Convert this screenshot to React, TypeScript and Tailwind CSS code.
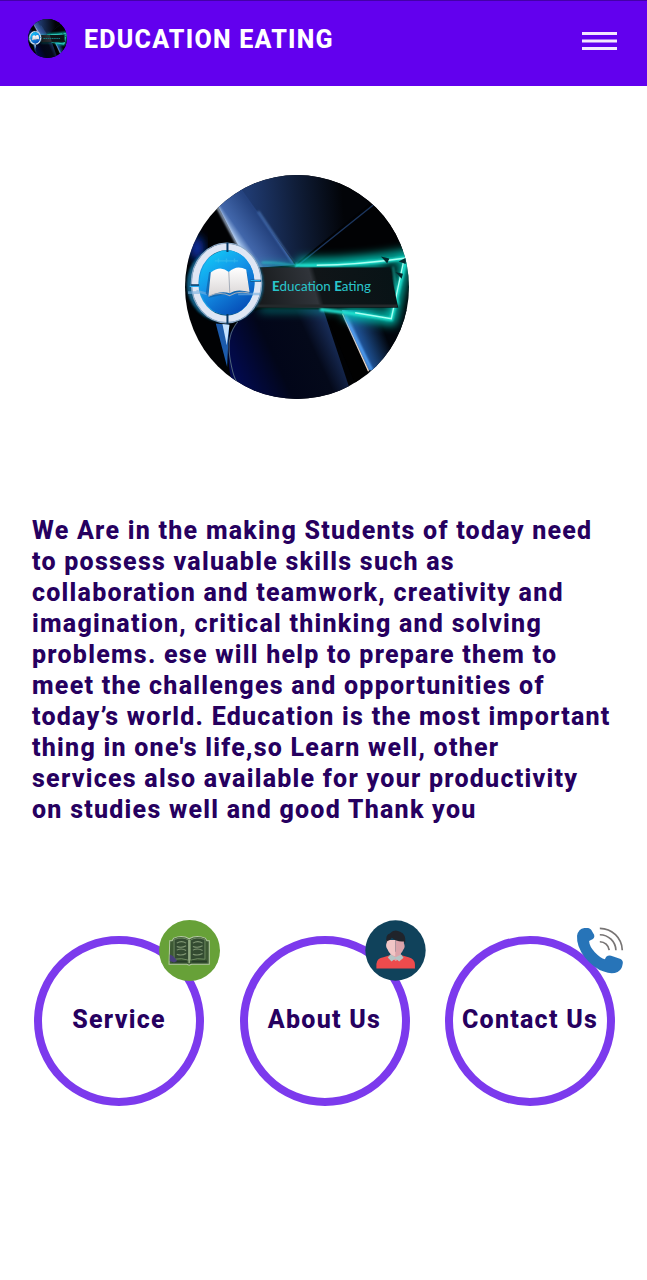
import type { ReactNode } from 'react';

function BrandArt({ id, className, withName = false }: { id: string; className: string; withName?: boolean }) {
  const ref = (name: string) => `url(#${id}-${name})`;
  return (
    <svg viewBox="26 26 670 670" className={className} role="img" aria-label="Education Eating logo">
      <defs>
        <clipPath id={`${id}-clip`}><circle cx="361" cy="361" r="335" /></clipPath>
        <linearGradient id={`${id}-beam`} x1="170" y1="210" x2="300" y2="120" gradientUnits="userSpaceOnUse">
          <stop offset="0" stopColor="#a9c8f0" /><stop offset="0.15" stopColor="#4267ab" /><stop offset="0.6" stopColor="#25437f" /><stop offset="1" stopColor="#1c3a78" />
        </linearGradient>
        <linearGradient id={`${id}-top`} x1="220" y1="150" x2="500" y2="130" gradientUnits="userSpaceOnUse">
          <stop offset="0" stopColor="#1f3a70" /><stop offset="0.5" stopColor="#101e3a" /><stop offset="1" stopColor="#020408" />
        </linearGradient>
        <linearGradient id={`${id}-low`} x1="170" y1="620" x2="470" y2="480" gradientUnits="userSpaceOnUse">
          <stop offset="0" stopColor="#020a50" /><stop offset="0.4" stopColor="#020619" /><stop offset="0.75" stopColor="#04091a" /><stop offset="1" stopColor="#1b3262" />
        </linearGradient>
        <linearGradient id={`${id}-right`} x1="520" y1="530" x2="620" y2="490" gradientUnits="userSpaceOnUse">
          <stop offset="0" stopColor="#8fc4ff" /><stop offset="0.3" stopColor="#1e5296" /><stop offset="1" stopColor="#01050c" />
        </linearGradient>
        <linearGradient id={`${id}-bar`} x1="250" y1="420" x2="640" y2="310" gradientUnits="userSpaceOnUse">
          <stop offset="0" stopColor="#171a1c" /><stop offset="0.42" stopColor="#30343a" /><stop offset="0.46" stopColor="#101518" /><stop offset="1" stopColor="#081316" />
        </linearGradient>
        <linearGradient id={`${id}-badge`} x1="0" y1="0" x2="0.6" y2="1">
          <stop offset="0" stopColor="#10d5fa" /><stop offset="0.5" stopColor="#1494e8" /><stop offset="1" stopColor="#0752ba" />
        </linearGradient>
        <linearGradient id={`${id}-page`} x1="0" y1="0" x2="0" y2="1">
          <stop offset="0" stopColor="#ffffff" /><stop offset="1" stopColor="#d9d5d5" />
        </linearGradient>
        <filter id={`${id}-glow`} x="-30%" y="-60%" width="160%" height="220%"><feGaussianBlur stdDeviation="14" /></filter>
        <filter id={`${id}-soft`} x="-20%" y="-20%" width="140%" height="140%"><feGaussianBlur stdDeviation="3" /></filter>
      </defs>
      <g clipPath={ref('clip')}>
        <rect x="20" y="20" width="690" height="690" fill="#010204" />
        <path d="M150 20H690L360 295 215 105Z" fill={ref('top')} />
        <path d="M120 110 175 40 355 295 220 305Z" fill={ref('beam')} />
        <path d="M690 20 358 292 470 290 700 250V80Z" fill="#010204" />
        <path d="M590 115 355 303" stroke="#1c365f" strokeWidth="4" />
        <path d="M122 120 218 300" stroke="#b3c8e5" strokeWidth="6" filter={ref('soft')} />
        <path d="M245 135 350 290" stroke="#5c8fd8" strokeWidth="4" filter={ref('soft')} />
        <ellipse cx="62" cy="245" rx="20" ry="36" fill="#0733ab" filter={ref('glow')} />
        <path d="M160 500Q200 430 260 428H440L530 700H180Q145 590 160 500Z" fill={ref('low')} />
        <path d="M440 425H493L575 610 535 650Z" fill="#010101" />
        <path d="M495 430H700V600L575 610Z" fill={ref('right')} />
        <path d="M497 440 575 613" stroke="#f4dac4" strokeWidth="4" />
        <path d="M505 450 585 610" stroke="#4fa2fa" strokeWidth="8" filter={ref('soft')} />
        <path d="M118 470 152 600 158 474Z" fill="#1c5bab" />
        <path d="M138 472 151 535 159 474Z" fill="#c5e2ff" />
        <path d="M184 465Q150 505 160 570T185 650" fill="none" stroke="#4d6479" strokeWidth="3" />
        <g fill="none" stroke="#04c6b5" strokeWidth="28" filter={ref('glow')}>
          <path d="M365 288Q500 296 690 265L645 460 500 440" />
          <path d="M250 300H620M250 428H640" strokeWidth="9" />
        </g>
        <g fill="none" stroke="#24e4d2" strokeWidth="10" filter={ref('soft')}>
          <path d="M355 296Q500 300 688 275L643 458Q570 445 430 428" />
          <path d="M255 288Q300 285 360 300M648 300 665 415" strokeWidth="3" />
        </g>
        <path d="M420 296Q540 295 682 275L643 456 535 438" fill="none" stroke="#a9fff1" strokeWidth="4" />
        <path d="M248 303H638L664 423H238Z" fill={ref('bar')} />
        <path d="M240 417H660" stroke="#24292b" strokeWidth="7" />
        <path d="M612 270 637 276 631 291ZM665 285 688 273 686 292ZM655 316 678 321 674 336Z" fill="#04292d" />
        <circle cx="146" cy="352" r="115" fill="#1272a0" opacity="0.8" filter={ref('soft')} />
        <circle cx="151" cy="349" r="94" fill="#1a9be0" />
        <ellipse cx="150" cy="349" rx="94" ry="108" fill="none" stroke="#dfe6f4" strokeWidth="20" />
        <ellipse cx="150" cy="349" rx="105" ry="119" fill="none" stroke="#8eaac7" strokeWidth="4" />
        <ellipse cx="152" cy="348" rx="82" ry="97" fill={ref('badge')} />
        <path d="M153 228V256M153 442V472M44 356H68M222 342H254" stroke="#073865" strokeWidth="6" />
        <path d="M40 359H68M222 342H252" stroke="#27a9ef" strokeWidth="4" />
        <path d="M35 378H70M60 373 105 385M185 382H250" stroke="#75afe0" strokeWidth="8" opacity="0.6" />
        <path d="M98 316 88 380 98 393 154 381 219 380 212 316Z" fill="#1265ac" opacity="0.8" />
        <path d="M103 318Q132 294 157 316Q181 293 209 309L219 376Q180 365 160 380Q132 370 96 390Z" fill={ref('page')} />
        <path d="M157 316 160 379M98 388Q132 374 160 387 185 372 218 379" fill="none" stroke="#a4adba" strokeWidth="3" />
        <path d="M115 283H185M126 276V288M150 276V288M174 276V288" stroke="#54ccea" strokeWidth="4" opacity="0.4" />
        {withName ? (
          <text x="286" y="374" fill="#29c5cb" fontFamily="Lato, sans-serif" fontSize="40">
            <tspan fontWeight="900">E</tspan>ducation <tspan fontWeight="900">E</tspan>ating
          </text>
        ) : (
          <path d="M290 362H580" stroke="#167b80" strokeWidth="18" strokeDasharray="28 9" />
        )}
      </g>
    </svg>
  );
}

const badgeClass = 'absolute -top-6 -right-6 size-[61px]';

function BookBadge() {
  return (
    <svg viewBox="31 29 182 182" className={badgeClass} aria-hidden="true">
      <circle cx="122" cy="120" r="91" fill="#67a138" />
      <path d="M63 91H70L75 83Q101 73 121 85 142 73 169 83L174 91H181V161H128L121 164 114 161H61Z" fill="#3d5934" stroke="#b5c9a4" strokeWidth="3" />
      <path d="M76 87Q102 78 119 89V149Q99 141 76 146ZM168 87Q142 78 125 89V149Q145 141 168 146Z" fill="#334b31" stroke="#86a477" strokeWidth="2" />
      <path d="M84 98Q98 89 112 98M84 108Q98 114 112 106M84 119Q98 112 112 120M84 131Q98 137 112 129M132 98Q147 89 161 98M132 108Q147 114 161 106M132 119Q147 112 161 120M132 131Q147 137 161 129" fill="none" stroke="#809774" strokeWidth="3" />
      <path d="M121 87V158" stroke="#a3ba92" strokeWidth="4" />
      <path d="M69 153H115M128 153H174" stroke="#263d27" strokeWidth="6" />
      <path d="M63 132Q74 135 85 151L76 156 63 151Z" fill="#49407d" />
    </svg>
  );
}

function PersonBadge() {
  return (
    <svg viewBox="31 29 182 182" className={badgeClass} aria-hidden="true">
      <circle cx="122" cy="120" r="90" fill="#10425b" />
      <path d="M65 174V160Q67 142 86 140L105 134H140L161 140Q179 144 180 161V174Z" fill="#ed4b4d" />
      <path d="M108 124H138V140L123 151 107 141Z" fill="#dca5a9" />
      <path d="M96 89H122V137Q105 134 98 116 91 107 96 96Z" fill="#f1c6c6" />
      <path d="M122 89H147V98Q152 108 146 116 139 133 122 137Z" fill="#dba3aa" />
      <path d="M95 97Q91 73 105 69 119 54 137 65 154 71 151 99L147 93Q124 95 111 81 106 91 98 92Z" fill="#20242b" />
      <path d="M107 132 122 140 139 132 146 142 133 153 122 144 110 153 99 141Z" fill="#b4c5c6" />
    </svg>
  );
}

function PhoneBadge() {
  return (
    <svg viewBox="45 29 182 182" className={badgeClass} aria-hidden="true">
      <path d="M66 76Q70 55 88 53H99Q108 54 112 65L117 73Q120 84 109 88L102 92Q103 109 119 125 136 143 149 146L153 139Q161 132 172 137L196 145Q205 151 202 161 200 177 187 184 170 192 146 183 116 173 89 140 64 108 66 76Z" fill="#2774b8" />
      <g fill="none" stroke="#777474" strokeWidth="5">
        <path d="M134 54A67 67 0 0 1 201 119" />
        <path d="M134 73A48 48 0 0 1 182 119" />
        <path d="M134 94A28 28 0 0 1 162 119" />
      </g>
    </svg>
  );
}

function CircleLink({ href, label, children }: { href: string; label: string; children: ReactNode }) {
  return (
    <a
      href={href}
      className="relative flex size-[170px] shrink-0 items-center justify-center rounded-full border-8 border-[#7c3aed] pb-0.5 text-[25px] font-extrabold tracking-wider whitespace-nowrap text-[#26005f]"
    >
      {label}
      {children}
    </a>
  );
}

export default function App() {
  return (
    <div className="min-h-screen bg-white font-['Roboto',sans-serif]">
      <header className="flex items-center border-t border-[#4400a8] bg-[#6200ee] pt-[18px] pr-[30px] pb-7 pl-7">
        <BrandArt id="header" className="size-[39px] shrink-0" />
        <h1 className="mt-0.5 ml-[17px] text-[25px] leading-8 font-extrabold tracking-wider text-white">EDUCATION EATING</h1>
        <button type="button" aria-label="Open menu" className="mt-1 ml-auto">
          <svg viewBox="0 0 35 20" className="h-5 w-[35px]" stroke="#f3e7ff" strokeWidth="3" aria-hidden="true">
            <path d="M0 2.5H35M0 10H35M0 17.5H35" />
          </svg>
        </button>
      </header>

      <main>
        <div className="flex justify-center pt-[89px] pr-[54px]">
          <BrandArt id="hero" className="size-56" withName />
        </div>
        <p className="mt-[116px] px-8 text-[25px] leading-[31px] font-extrabold tracking-wider text-[#26005f]">
          We Are in the making Students of today need to possess valuable skills such as collaboration and teamwork,
          creativity and imagination, critical thinking and solving problems. ese will help to prepare them to meet the
          challenges and opportunities of today’s world. Education is the most important thing in one's life,so Learn
          well, other
          <br />
          services also available for your productivity on studies well and good Thank you
        </p>
        <nav aria-label="Sections" className="mt-[111px] flex justify-between gap-4 pr-8 pb-16 pl-[34px]">
          <CircleLink href="#service" label="Service"><BookBadge /></CircleLink>
          <CircleLink href="#about" label="About Us"><PersonBadge /></CircleLink>
          <CircleLink href="#contact" label="Contact Us"><PhoneBadge /></CircleLink>
        </nav>
      </main>
    </div>
  );
}
